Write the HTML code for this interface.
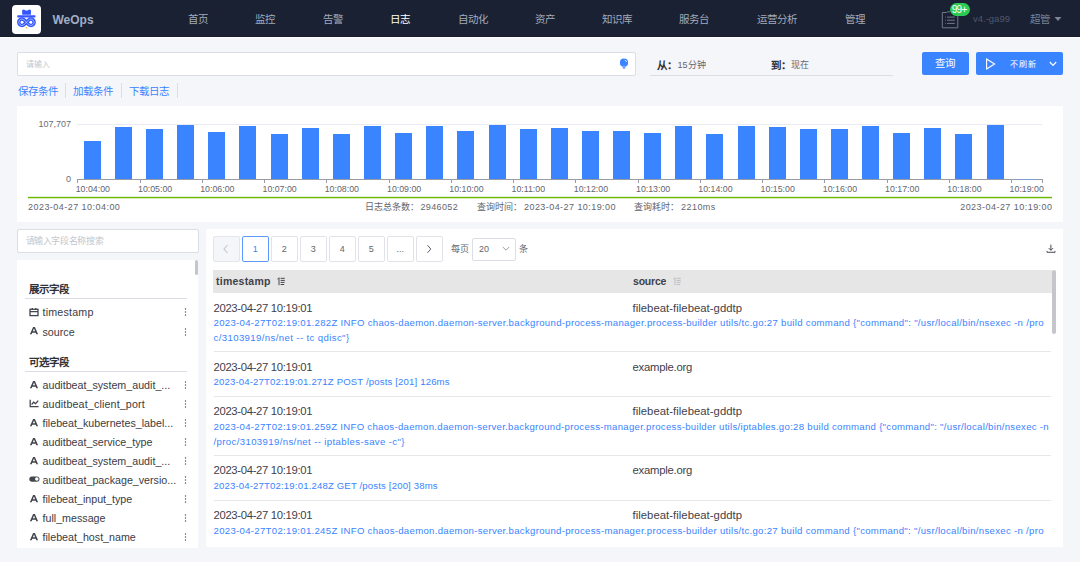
<!DOCTYPE html>
<html lang="zh-CN">
<head>
<meta charset="utf-8">
<style>
*{box-sizing:border-box;margin:0;padding:0}
html,body{width:1080px;height:562px;overflow:hidden}
body{background:#f5f6fa;font-family:"Liberation Sans",sans-serif;color:#63656e;position:relative}
.abs{position:absolute}
#hdr{left:0;top:0;width:1080px;height:37px;background:#1a2132;border-bottom:1px solid #161c2b}
#hdrw{left:0;top:37px;width:1080px;height:1px;background:#fdfdfe}
.logo{left:12px;top:4.5px;width:28.5px;height:29.5px;background:#fff;border-radius:4px}
.brand{left:52.5px;top:12.2px;font-size:12px;font-weight:bold;color:#a1aec6;line-height:16px}
.nav{top:12.3px;font-size:10.5px;color:#a3abbb;line-height:14px;white-space:nowrap}
.nav.act{color:#fff}
.inp{background:#fff;border:1px solid #dcdee5;border-radius:2px}
.ph{font-size:8.7px;color:#c4c6cc;white-space:nowrap}
.link{font-size:10.5px;color:#3a84ff;line-height:14px;white-space:nowrap}
.sep{width:1px;background:#dcdee5}
.btn{background:#3a84ff;border-radius:2px;color:#fff}
.panel{background:#fff}
.tick{font-size:8.8px;color:#63656e;white-space:nowrap;line-height:10px}
.ylab{font-size:9px;color:#6b6d76;line-height:11px;white-space:nowrap}
.tk{top:179px;width:1px;height:4px;background:#9a9ca4}
.bar{background:#3a84ff;width:17px}
.foot{font-size:9px;color:#63656e;white-space:nowrap;line-height:12px}
.zh{font-size:9px}
.fh{font-size:10.5px;font-weight:bold;color:#313238;line-height:14px;white-space:nowrap}
.fl{left:25px;width:162px;height:1px;background:#dcdee5}
.fi{font-size:10.7px;color:#3a3c44;line-height:14px;white-space:nowrap}
.dots{left:184px;width:2px}
.pg{width:26.5px;height:26.3px;border:1px solid #e1e3e8;border-radius:2px;font-size:9px;color:#63656e;text-align:center;line-height:24px;background:#fff}
.th{font-size:10.5px;font-weight:bold;color:#3f4149;line-height:14px;white-space:nowrap}
.dt{font-size:11.3px;color:#3f4149;line-height:14px;white-space:nowrap}
.lk{font-size:9.6px;color:#3a84ff;line-height:12px;white-space:nowrap}
.rs{left:214px;width:837px;height:1px;background:#e6e7eb}
</style>
</head>
<body>
<!-- header -->
<div id="hdr" class="abs"></div>
<div id="hdrw" class="abs"></div>
<div class="abs logo"><svg width="28.5" height="29.5" viewBox="0 0 28 29" style="position:absolute;left:0;top:0">
<path d="M10 4.8 L11.8 4.4 L13.2 5.3 L15.4 5.3 L16.8 4.4 L18.6 4.8 L18.6 9.7 L10 9.7 Z" fill="#3456ff"/>
<rect x="5.2" y="10" width="17.8" height="2.4" rx="0.5" fill="#3456ff"/>
<path d="M16.415 14.802 A3.1 3.1 0 1 1 16.415 19.198 L11.985 14.802 A3.1 3.1 0 1 0 11.985 19.198 Z" fill="none" stroke="#3456ff" stroke-width="3.5" stroke-linejoin="round"/>
<path d="M16.415 14.802 A3.1 3.1 0 1 1 16.415 19.198 L11.985 14.802 A3.1 3.1 0 1 0 11.985 19.198 Z" fill="none" stroke="#fff" stroke-width="0.5"/>
<circle cx="9.8" cy="17" r="1.15" fill="#fff"/><circle cx="18.6" cy="17" r="1.15" fill="#fff"/>
<circle cx="14.2" cy="22.4" r="0.8" fill="#ffa726"/>
</svg></div>
<!-- header right -->
<svg class="abs" style="left:941px;top:11px" width="18" height="18" viewBox="0 0 18 18">
<path d="M1.3 1.5 L5.5 1.5 L6.5 0.8 L9 0.8 M1.3 1.5 L1.3 16.8 L16.8 16.8 L16.8 5" fill="none" stroke="#7d838f" stroke-width="0.9"/>
<path d="M6.1 6.1h7.7M6.1 9.2h7.7M6.1 12.4h7.7" stroke="#7d838f" stroke-width="0.9"/>
<path d="M4 6.1h0.8M4 9.2h0.8M4 12.4h0.8" stroke="#7d838f" stroke-width="0.8"/>
</svg>
<div class="abs" style="left:949.5px;top:3px;width:20px;height:13px;border-radius:7px;background:#2dcb56;color:#fff;font-size:10px;line-height:14.5px;text-align:center;letter-spacing:-0.6px;text-indent:-0.5px">99+</div>
<div class="abs" style="left:973px;top:13px;font-size:9.5px;line-height:12px;color:#4e5770;white-space:nowrap">v4.-ga99</div>
<div class="abs" style="left:1029.5px;top:12px;font-size:10.5px;line-height:14px;color:#7b8496;white-space:nowrap">超管</div>
<svg class="abs" style="left:1054px;top:16px" width="8" height="6" viewBox="0 0 8 6"><path d="M0.5 1 L7.5 1 L4 5 Z" fill="#7b8496"/></svg>
<div class="abs brand">WeOps</div>
<div class="abs nav" style="left:187.8px">首页</div>
<div class="abs nav" style="left:255.3px">监控</div>
<div class="abs nav" style="left:322.8px">告警</div>
<div class="abs nav act" style="left:390.3px">日志</div>
<div class="abs nav" style="left:457.8px">自动化</div>
<div class="abs nav" style="left:535.3px">资产</div>
<div class="abs nav" style="left:602.3px">知识库</div>
<div class="abs nav" style="left:679.3px">服务台</div>
<div class="abs nav" style="left:757.3px">运营分析</div>
<div class="abs nav" style="left:844.8px">管理</div>

<!-- search row -->
<div class="abs inp" style="left:17px;top:52px;width:619px;height:24px"></div>
<div class="abs ph" style="left:25.5px;top:58px;font-size:8px">请输入</div>
<svg class="abs" style="left:618.5px;top:58px" width="10" height="12" viewBox="0 0 10 12"><circle cx="5" cy="4.7" r="4.1" fill="#3a84ff"/><path d="M3.5 7.6 L6.5 7.6 L6.2 10.8 L3.8 10.8 Z" fill="#6ba3ff"/><path d="M5.8 2.1 A2.7 2.7 0 0 1 7.6 4.1" stroke="#fff" stroke-width="0.8" fill="none"/></svg>
<div class="abs" style="left:656.5px;top:58px;font-size:10.5px;line-height:14px;font-weight:bold;color:#313238;white-space:nowrap">从：</div>
<div class="abs" style="left:677.5px;top:59px;font-size:9px;line-height:12px;color:#63656e;white-space:nowrap">15分钟</div>
<div class="abs" style="left:770.5px;top:58px;font-size:10.5px;line-height:14px;font-weight:bold;color:#313238;white-space:nowrap">到：</div>
<div class="abs" style="left:791px;top:59px;font-size:9px;line-height:12px;color:#63656e;white-space:nowrap">现在</div>
<div class="abs" style="left:650px;top:74.5px;width:243px;height:1px;background:#dcdee5"></div>
<div class="abs btn" style="left:922px;top:52px;width:47px;height:23px"></div>
<div class="abs btn" style="left:976px;top:52px;width:87px;height:23px"></div>
<div class="abs" style="left:934.5px;top:56.3px;font-size:10.5px;line-height:14px;color:#fff;white-space:nowrap">查询</div>
<svg class="abs" style="left:985px;top:58px" width="11" height="12" viewBox="0 0 11 12"><path d="M1.6 1 L9.6 6 L1.6 11 Z" fill="none" stroke="#fff" stroke-width="1.1"/></svg>
<div class="abs" style="left:1010px;top:58.5px;font-size:8px;line-height:12px;color:#fff;white-space:nowrap;letter-spacing:0.8px">不刷新</div>
<svg class="abs" style="left:1049px;top:61px" width="8" height="6" viewBox="0 0 8 6"><path d="M0.8 1 L4 4.3 L7.2 1" fill="none" stroke="#fff" stroke-width="1.2"/></svg>

<!-- links -->
<div class="abs link" style="left:17.5px;top:83.5px">保存条件</div>
<div class="abs sep" style="left:65px;top:83px;height:15px"></div>
<div class="abs link" style="left:73px;top:83.5px">加载条件</div>
<div class="abs sep" style="left:121px;top:83px;height:15px"></div>
<div class="abs link" style="left:129px;top:83.5px">下载日志</div>
<div class="abs sep" style="left:177px;top:83px;height:15px"></div>

<!-- chart panel -->
<div class="abs panel" style="left:17px;top:106px;width:1046px;height:116px"></div>
<div class="abs ylab" style="right:1009px;top:118.5px">107,707</div>
<div class="abs ylab" style="right:1009px;top:173.5px">0</div>
<div class="abs" style="left:77px;top:124px;width:965px;height:1px;background:#e9ebf3"></div>
<div class="abs bar" style="left:83.8px;top:140.8px;height:38.7px"></div>
<div class="abs bar" style="left:114.9px;top:126.8px;height:52.7px"></div>
<div class="abs bar" style="left:146.1px;top:128.9px;height:50.6px"></div>
<div class="abs bar" style="left:177.2px;top:124.8px;height:54.7px"></div>
<div class="abs bar" style="left:208.3px;top:132.2px;height:47.3px"></div>
<div class="abs bar" style="left:239.4px;top:125.9px;height:53.6px"></div>
<div class="abs bar" style="left:270.6px;top:134.2px;height:45.3px"></div>
<div class="abs bar" style="left:301.7px;top:128.1px;height:51.4px"></div>
<div class="abs bar" style="left:332.8px;top:134.4px;height:45.1px"></div>
<div class="abs bar" style="left:364.0px;top:125.6px;height:53.9px"></div>
<div class="abs bar" style="left:395.1px;top:133.1px;height:46.4px"></div>
<div class="abs bar" style="left:426.2px;top:126.4px;height:53.1px"></div>
<div class="abs bar" style="left:457.4px;top:131.4px;height:48.1px"></div>
<div class="abs bar" style="left:488.5px;top:125.0px;height:54.5px"></div>
<div class="abs bar" style="left:519.6px;top:128.6px;height:50.9px"></div>
<div class="abs bar" style="left:550.8px;top:127.5px;height:52.0px"></div>
<div class="abs bar" style="left:581.9px;top:131.4px;height:48.1px"></div>
<div class="abs bar" style="left:613.0px;top:130.6px;height:48.9px"></div>
<div class="abs bar" style="left:644.1px;top:132.8px;height:46.7px"></div>
<div class="abs bar" style="left:675.3px;top:126.1px;height:53.4px"></div>
<div class="abs bar" style="left:706.4px;top:133.9px;height:45.6px"></div>
<div class="abs bar" style="left:737.5px;top:126.4px;height:53.1px"></div>
<div class="abs bar" style="left:768.7px;top:126.9px;height:52.6px"></div>
<div class="abs bar" style="left:799.8px;top:128.9px;height:50.6px"></div>
<div class="abs bar" style="left:830.9px;top:128.6px;height:50.9px"></div>
<div class="abs bar" style="left:862.0px;top:126.4px;height:53.1px"></div>
<div class="abs bar" style="left:893.2px;top:132.6px;height:46.9px"></div>
<div class="abs bar" style="left:924.3px;top:128.4px;height:51.1px"></div>
<div class="abs bar" style="left:955.4px;top:134.1px;height:45.4px"></div>
<div class="abs bar" style="left:986.6px;top:125.0px;height:54.5px"></div>
<div class="abs tk" style="left:77.2px"></div>
<div class="abs tk" style="left:139.5px"></div>
<div class="abs tk" style="left:201.7px"></div>
<div class="abs tk" style="left:264.0px"></div>
<div class="abs tk" style="left:326.2px"></div>
<div class="abs tk" style="left:388.5px"></div>
<div class="abs tk" style="left:450.8px"></div>
<div class="abs tk" style="left:513.0px"></div>
<div class="abs tk" style="left:575.3px"></div>
<div class="abs tk" style="left:637.5px"></div>
<div class="abs tk" style="left:699.8px"></div>
<div class="abs tk" style="left:762.1px"></div>
<div class="abs tk" style="left:824.3px"></div>
<div class="abs tk" style="left:886.6px"></div>
<div class="abs tk" style="left:948.8px"></div>
<div class="abs tk" style="left:1011.1px"></div>
<div class="abs tick" style="left:75.7px;top:184px">10:04:00</div>
<div class="abs tick" style="left:138.0px;top:184px">10:05:00</div>
<div class="abs tick" style="left:200.2px;top:184px">10:06:00</div>
<div class="abs tick" style="left:262.5px;top:184px">10:07:00</div>
<div class="abs tick" style="left:324.7px;top:184px">10:08:00</div>
<div class="abs tick" style="left:387.0px;top:184px">10:09:00</div>
<div class="abs tick" style="left:449.3px;top:184px">10:10:00</div>
<div class="abs tick" style="left:511.5px;top:184px">10:11:00</div>
<div class="abs tick" style="left:573.8px;top:184px">10:12:00</div>
<div class="abs tick" style="left:636.0px;top:184px">10:13:00</div>
<div class="abs tick" style="left:698.3px;top:184px">10:14:00</div>
<div class="abs tick" style="left:760.6px;top:184px">10:15:00</div>
<div class="abs tick" style="left:822.8px;top:184px">10:16:00</div>
<div class="abs tick" style="left:885.1px;top:184px">10:17:00</div>
<div class="abs tick" style="left:947.3px;top:184px">10:18:00</div>
<div class="abs tick" style="left:1009.6px;top:184px">10:19:00</div>

<div class="abs" style="left:77px;top:179px;width:966px;height:1px;background:#9a9ca4"></div>
<div class="abs" style="left:1017.5px;top:179px;width:17.5px;height:1px;background:#7d9fe0"></div>
<div class="abs tk" style="left:1042px"></div>
<div class="abs" style="left:28px;top:197px;width:1024px;height:1px;background:#6cb800;box-shadow:0 0.6px 0 rgba(108,184,0,0.45),0 -0.6px 0 rgba(108,184,0,0.3)"></div>
<div class="abs foot" style="left:28px;top:201.2px;letter-spacing:0.46px">2023-04-27 10:04:00</div>
<div class="abs foot zh" style="left:365px;top:201.2px">日志总条数：</div>
<div class="abs foot" style="left:420.5px;top:201.2px;letter-spacing:0.35px">2946052</div>
<div class="abs foot zh" style="left:476.5px;top:201.2px">查询时间：</div>
<div class="abs foot" style="left:524px;top:201.2px;letter-spacing:0.44px">2023-04-27 10:19:00</div>
<div class="abs foot zh" style="left:633.5px;top:201.2px">查询耗时：</div>
<div class="abs foot" style="left:681px;top:201.2px;letter-spacing:0.46px">2210ms</div>
<div class="abs foot" style="right:27.5px;top:201.2px;letter-spacing:0.46px">2023-04-27 10:19:00</div>

<!-- left column -->
<div class="abs inp" style="left:17px;top:229px;width:182px;height:24px"></div>
<div class="abs ph" style="left:25.5px;top:234px;font-size:9px;letter-spacing:-0.35px">请输入字段名称搜索</div>
<div class="abs panel" style="left:17px;top:259.5px;width:181px;height:288px"></div>
<div class="abs" style="left:194.5px;top:260px;width:3.5px;height:15px;border-radius:2px;background:#c4c6cc"></div>
<div class="abs fh" style="left:29px;top:282px">展示字段</div>
<div class="abs fl" style="top:298px"></div>
<svg class="abs" style="left:29px;top:306.5px" width="10" height="10" viewBox="0 0 10 10"><rect x="1" y="2.3" width="8" height="6.3" fill="none" stroke="#44464e" stroke-width="1.3"/><path d="M1 4.6 L9 4.6 M3.3 0.9 L3.3 2.5 M6.7 0.9 L6.7 2.5" stroke="#44464e" stroke-width="1.3"/></svg>
<div class="abs fi" style="left:42.5px;top:305.3px;letter-spacing:0.2px">timestamp</div>
<svg class="abs" style="left:183.5px;top:307.3px" width="3" height="10" viewBox="0 0 3 10"><circle cx="1.5" cy="2" r="0.7" fill="#4a4c55"/><circle cx="1.5" cy="5" r="0.7" fill="#4a4c55"/><circle cx="1.5" cy="8" r="0.7" fill="#4a4c55"/></svg>
<svg class="abs" style="left:28.8px;top:325.3px" width="10" height="10" viewBox="0 0 10 10"><path d="M0.9 9.3 L4.1 2 L5.9 2 L9.1 9.3 L7.3 9.3 L6.7 7.8 L3.3 7.8 L2.7 9.3 Z M3.9 6.3 L6.1 6.3 L5 3.6 Z" fill="#44464e" fill-rule="evenodd"/></svg>
<div class="abs fi" style="left:42.5px;top:324.5px">source</div>
<svg class="abs" style="left:183.5px;top:326.5px" width="3" height="10" viewBox="0 0 3 10"><circle cx="1.5" cy="2" r="0.7" fill="#4a4c55"/><circle cx="1.5" cy="5" r="0.7" fill="#4a4c55"/><circle cx="1.5" cy="8" r="0.7" fill="#4a4c55"/></svg>
<div class="abs fh" style="left:29px;top:355px">可选字段</div>
<div class="abs fl" style="top:371px"></div>
<svg class="abs" style="left:28.8px;top:378.7px" width="10" height="10" viewBox="0 0 10 10"><path d="M0.9 9.3 L4.1 2 L5.9 2 L9.1 9.3 L7.3 9.3 L6.7 7.8 L3.3 7.8 L2.7 9.3 Z M3.9 6.3 L6.1 6.3 L5 3.6 Z" fill="#44464e" fill-rule="evenodd"/></svg>
<div class="abs fi" style="left:42.5px;top:377.9px">auditbeat_system_audit_...</div>
<svg class="abs" style="left:183.5px;top:379.9px" width="3" height="10" viewBox="0 0 3 10"><circle cx="1.5" cy="2" r="0.7" fill="#4a4c55"/><circle cx="1.5" cy="5" r="0.7" fill="#4a4c55"/><circle cx="1.5" cy="8" r="0.7" fill="#4a4c55"/></svg>
<svg class="abs" style="left:29px;top:398.4px" width="10" height="10" viewBox="0 0 10 10"><path d="M1.2 1.8 L1.2 8.6 L9.6 8.6 M2.6 6.6 L4.6 4.2 L6.6 5.6 L9.2 2.6" fill="none" stroke="#44464e" stroke-width="1.3"/></svg>
<div class="abs fi" style="left:42.5px;top:397.3px;letter-spacing:0.15px">auditbeat_client_port</div>
<svg class="abs" style="left:183.5px;top:399.3px" width="3" height="10" viewBox="0 0 3 10"><circle cx="1.5" cy="2" r="0.7" fill="#4a4c55"/><circle cx="1.5" cy="5" r="0.7" fill="#4a4c55"/><circle cx="1.5" cy="8" r="0.7" fill="#4a4c55"/></svg>
<svg class="abs" style="left:28.8px;top:416.8px" width="10" height="10" viewBox="0 0 10 10"><path d="M0.9 9.3 L4.1 2 L5.9 2 L9.1 9.3 L7.3 9.3 L6.7 7.8 L3.3 7.8 L2.7 9.3 Z M3.9 6.3 L6.1 6.3 L5 3.6 Z" fill="#44464e" fill-rule="evenodd"/></svg>
<div class="abs fi" style="left:42.5px;top:416.0px">filebeat_kubernetes_label...</div>
<svg class="abs" style="left:183.5px;top:418.0px" width="3" height="10" viewBox="0 0 3 10"><circle cx="1.5" cy="2" r="0.7" fill="#4a4c55"/><circle cx="1.5" cy="5" r="0.7" fill="#4a4c55"/><circle cx="1.5" cy="8" r="0.7" fill="#4a4c55"/></svg>
<svg class="abs" style="left:28.8px;top:436.0px" width="10" height="10" viewBox="0 0 10 10"><path d="M0.9 9.3 L4.1 2 L5.9 2 L9.1 9.3 L7.3 9.3 L6.7 7.8 L3.3 7.8 L2.7 9.3 Z M3.9 6.3 L6.1 6.3 L5 3.6 Z" fill="#44464e" fill-rule="evenodd"/></svg>
<div class="abs fi" style="left:42.5px;top:435.2px">auditbeat_service_type</div>
<svg class="abs" style="left:183.5px;top:437.2px" width="3" height="10" viewBox="0 0 3 10"><circle cx="1.5" cy="2" r="0.7" fill="#4a4c55"/><circle cx="1.5" cy="5" r="0.7" fill="#4a4c55"/><circle cx="1.5" cy="8" r="0.7" fill="#4a4c55"/></svg>
<svg class="abs" style="left:28.8px;top:454.7px" width="10" height="10" viewBox="0 0 10 10"><path d="M0.9 9.3 L4.1 2 L5.9 2 L9.1 9.3 L7.3 9.3 L6.7 7.8 L3.3 7.8 L2.7 9.3 Z M3.9 6.3 L6.1 6.3 L5 3.6 Z" fill="#44464e" fill-rule="evenodd"/></svg>
<div class="abs fi" style="left:42.5px;top:453.9px">auditbeat_system_audit_...</div>
<svg class="abs" style="left:183.5px;top:455.9px" width="3" height="10" viewBox="0 0 3 10"><circle cx="1.5" cy="2" r="0.7" fill="#4a4c55"/><circle cx="1.5" cy="5" r="0.7" fill="#4a4c55"/><circle cx="1.5" cy="8" r="0.7" fill="#4a4c55"/></svg>
<svg class="abs" style="left:29px;top:474.2px" width="11" height="10" viewBox="0 0 11 10"><rect x="0.3" y="2.4" width="10.2" height="5.4" rx="2.7" fill="#44464e"/><circle cx="7.8" cy="5.1" r="1.75" fill="#fff"/></svg>
<div class="abs fi" style="left:42.5px;top:472.7px">auditbeat_package_versio...</div>
<svg class="abs" style="left:183.5px;top:474.7px" width="3" height="10" viewBox="0 0 3 10"><circle cx="1.5" cy="2" r="0.7" fill="#4a4c55"/><circle cx="1.5" cy="5" r="0.7" fill="#4a4c55"/><circle cx="1.5" cy="8" r="0.7" fill="#4a4c55"/></svg>
<svg class="abs" style="left:28.8px;top:492.6px" width="10" height="10" viewBox="0 0 10 10"><path d="M0.9 9.3 L4.1 2 L5.9 2 L9.1 9.3 L7.3 9.3 L6.7 7.8 L3.3 7.8 L2.7 9.3 Z M3.9 6.3 L6.1 6.3 L5 3.6 Z" fill="#44464e" fill-rule="evenodd"/></svg>
<div class="abs fi" style="left:42.5px;top:491.8px">filebeat_input_type</div>
<svg class="abs" style="left:183.5px;top:493.8px" width="3" height="10" viewBox="0 0 3 10"><circle cx="1.5" cy="2" r="0.7" fill="#4a4c55"/><circle cx="1.5" cy="5" r="0.7" fill="#4a4c55"/><circle cx="1.5" cy="8" r="0.7" fill="#4a4c55"/></svg>
<svg class="abs" style="left:28.8px;top:512.0px" width="10" height="10" viewBox="0 0 10 10"><path d="M0.9 9.3 L4.1 2 L5.9 2 L9.1 9.3 L7.3 9.3 L6.7 7.8 L3.3 7.8 L2.7 9.3 Z M3.9 6.3 L6.1 6.3 L5 3.6 Z" fill="#44464e" fill-rule="evenodd"/></svg>
<div class="abs fi" style="left:42.5px;top:511.2px">full_message</div>
<svg class="abs" style="left:183.5px;top:513.2px" width="3" height="10" viewBox="0 0 3 10"><circle cx="1.5" cy="2" r="0.7" fill="#4a4c55"/><circle cx="1.5" cy="5" r="0.7" fill="#4a4c55"/><circle cx="1.5" cy="8" r="0.7" fill="#4a4c55"/></svg>
<svg class="abs" style="left:28.8px;top:530.8px" width="10" height="10" viewBox="0 0 10 10"><path d="M0.9 9.3 L4.1 2 L5.9 2 L9.1 9.3 L7.3 9.3 L6.7 7.8 L3.3 7.8 L2.7 9.3 Z M3.9 6.3 L6.1 6.3 L5 3.6 Z" fill="#44464e" fill-rule="evenodd"/></svg>
<div class="abs fi" style="left:42.5px;top:530.0px">filebeat_host_name</div>
<svg class="abs" style="left:183.5px;top:532.0px" width="3" height="10" viewBox="0 0 3 10"><circle cx="1.5" cy="2" r="0.7" fill="#4a4c55"/><circle cx="1.5" cy="5" r="0.7" fill="#4a4c55"/><circle cx="1.5" cy="8" r="0.7" fill="#4a4c55"/></svg>

<!-- table panel -->
<div class="abs panel" style="left:206px;top:229px;width:857px;height:318px"></div>
<div class="abs pg" style="left:213px;top:236.2px;background:#f5f6fa;border-color:#e3e5ea"><svg width="8" height="10" viewBox="0 0 8 10" style="margin-top:7px"><path d="M5.5 1 L2 5 L5.5 9" fill="none" stroke="#c4c6cc" stroke-width="1.1"/></svg></div>
<div class="abs pg" style="left:242px;top:236.2px;border-color:#5b98ff;color:#3a84ff">1</div>
<div class="abs pg" style="left:271px;top:236.2px">2</div>
<div class="abs pg" style="left:300px;top:236.2px">3</div>
<div class="abs pg" style="left:329px;top:236.2px">4</div>
<div class="abs pg" style="left:358px;top:236.2px">5</div>
<div class="abs pg" style="left:387px;top:236.2px">...</div>
<div class="abs pg" style="left:416px;top:236.2px"><svg width="8" height="10" viewBox="0 0 8 10" style="margin-top:7px"><path d="M2.5 1.2 L5.8 5 L2.5 8.8" fill="none" stroke="#63656e" stroke-width="1"/></svg></div>
<div class="abs" style="left:450.5px;top:242.5px;font-size:9px;line-height:12px;color:#63656e;white-space:nowrap">每页</div>
<div class="abs" style="left:471.5px;top:238px;width:44px;height:22.5px;border:1px solid #dcdee5;border-radius:2px;background:#fff"></div>
<div class="abs" style="left:479px;top:243px;font-size:9px;line-height:12px;color:#63656e">20</div>
<svg class="abs" style="left:501.5px;top:246px" width="8" height="6" viewBox="0 0 8 6"><path d="M0.8 1 L4 4.2 L7.2 1" fill="none" stroke="#9a9ca4" stroke-width="1"/></svg>
<div class="abs" style="left:518.5px;top:242.5px;font-size:9px;line-height:12px;color:#63656e">条</div>
<svg class="abs" style="left:1045.5px;top:243.5px" width="10" height="10" viewBox="0 0 10 10"><path d="M4.9 0.6 L4.9 6.2 M2.7 4.1 L4.9 6.3 L7.1 4.1 M1 6.9 L1 8.3 L9 8.3 L9 6.9" fill="none" stroke="#4a4c55" stroke-width="1"/></svg>
<div class="abs" style="left:213px;top:270px;width:839px;height:22.5px;background:#e6e6e6"></div>
<div class="abs" style="left:1052px;top:270px;width:3.5px;height:64px;border-radius:2px;background:#c4c6cc"></div>
<div class="abs th" style="left:216px;top:274px;letter-spacing:0.24px">timestamp</div>
<svg class="abs" style="left:276.5px;top:277px" width="8" height="9" viewBox="0 0 8 9"><path d="M2 0.8 L2 8.2 M0.4 2.4 L2.1 0.7 M3.6 1.3 H7.8 M3.6 3.4 H7.8 M3.6 5.4 H7.6 M3.6 7.5 H7.2" fill="none" stroke="#44464e" stroke-width="1"/></svg>
<div class="abs th" style="left:633px;top:274px;letter-spacing:-0.2px">source</div>
<svg class="abs" style="left:672.5px;top:277px" width="8" height="9" viewBox="0 0 8 9"><path d="M2 0.8 L2 8.2 M0.4 2.4 L2.1 0.7 M3.6 1.3 H7.8 M3.6 3.4 H7.8 M3.6 5.4 H7.6 M3.6 7.5 H7.2" fill="none" stroke="#b8bac0" stroke-width="0.9"/></svg>
<div class="abs dt" style="left:213.5px;top:300.6px;letter-spacing:-0.33px">2023-04-27 10:19:01</div>
<div class="abs dt src" style="left:632.5px;top:300.6px;letter-spacing:0.04px">filebeat-filebeat-gddtp</div>
<div class="abs lk" style="left:213.5px;top:316.9px;letter-spacing:0.303px">2023-04-27T02:19:01.282Z INFO chaos-daemon.daemon-server.background-process-manager.process-builder utils/tc.go:27 build command {"command": "/usr/local/bin/nsexec -n /pro</div>
<div class="abs lk" style="left:213.5px;top:331.7px;letter-spacing:0.384px">c/3103919/ns/net -- tc qdisc"}</div>
<div class="abs rs" style="top:351.0px"></div>
<div class="abs dt" style="left:213.5px;top:359.5px;letter-spacing:-0.33px">2023-04-27 10:19:01</div>
<div class="abs dt src" style="left:632.5px;top:359.5px;letter-spacing:-0.23px">example.org</div>
<div class="abs lk" style="left:213.5px;top:375.8px;letter-spacing:0.147px">2023-04-27T02:19:01.271Z POST /posts [201] 126ms</div>
<div class="abs rs" style="top:395.9px"></div>
<div class="abs dt" style="left:213.5px;top:404.4px;letter-spacing:-0.33px">2023-04-27 10:19:01</div>
<div class="abs dt src" style="left:632.5px;top:404.4px;letter-spacing:0.04px">filebeat-filebeat-gddtp</div>
<div class="abs lk" style="left:213.5px;top:420.7px;letter-spacing:0.293px">2023-04-27T02:19:01.259Z INFO chaos-daemon.daemon-server.background-process-manager.process-builder utils/iptables.go:28 build command {"command": "/usr/local/bin/nsexec -n</div>
<div class="abs lk" style="left:213.5px;top:435.5px;letter-spacing:0.374px">/proc/3103919/ns/net -- iptables-save -c"}</div>
<div class="abs rs" style="top:454.7px"></div>
<div class="abs dt" style="left:213.5px;top:463.2px;letter-spacing:-0.33px">2023-04-27 10:19:01</div>
<div class="abs dt src" style="left:632.5px;top:463.2px;letter-spacing:-0.23px">example.org</div>
<div class="abs lk" style="left:213.5px;top:479.5px;letter-spacing:0.150px">2023-04-27T02:19:01.248Z GET /posts [200] 38ms</div>
<div class="abs rs" style="top:499.7px"></div>
<div class="abs dt" style="left:213.5px;top:508.2px;letter-spacing:-0.33px">2023-04-27 10:19:01</div>
<div class="abs dt src" style="left:632.5px;top:508.2px;letter-spacing:0.04px">filebeat-filebeat-gddtp</div>
<div class="abs lk" style="left:213.5px;top:524.5px;letter-spacing:0.302px">2023-04-27T02:19:01.245Z INFO chaos-daemon.daemon-server.background-process-manager.process-builder utils/tc.go:27 build command {"command": "/usr/local/bin/nsexec -n /pro</div>

</body>
</html>
